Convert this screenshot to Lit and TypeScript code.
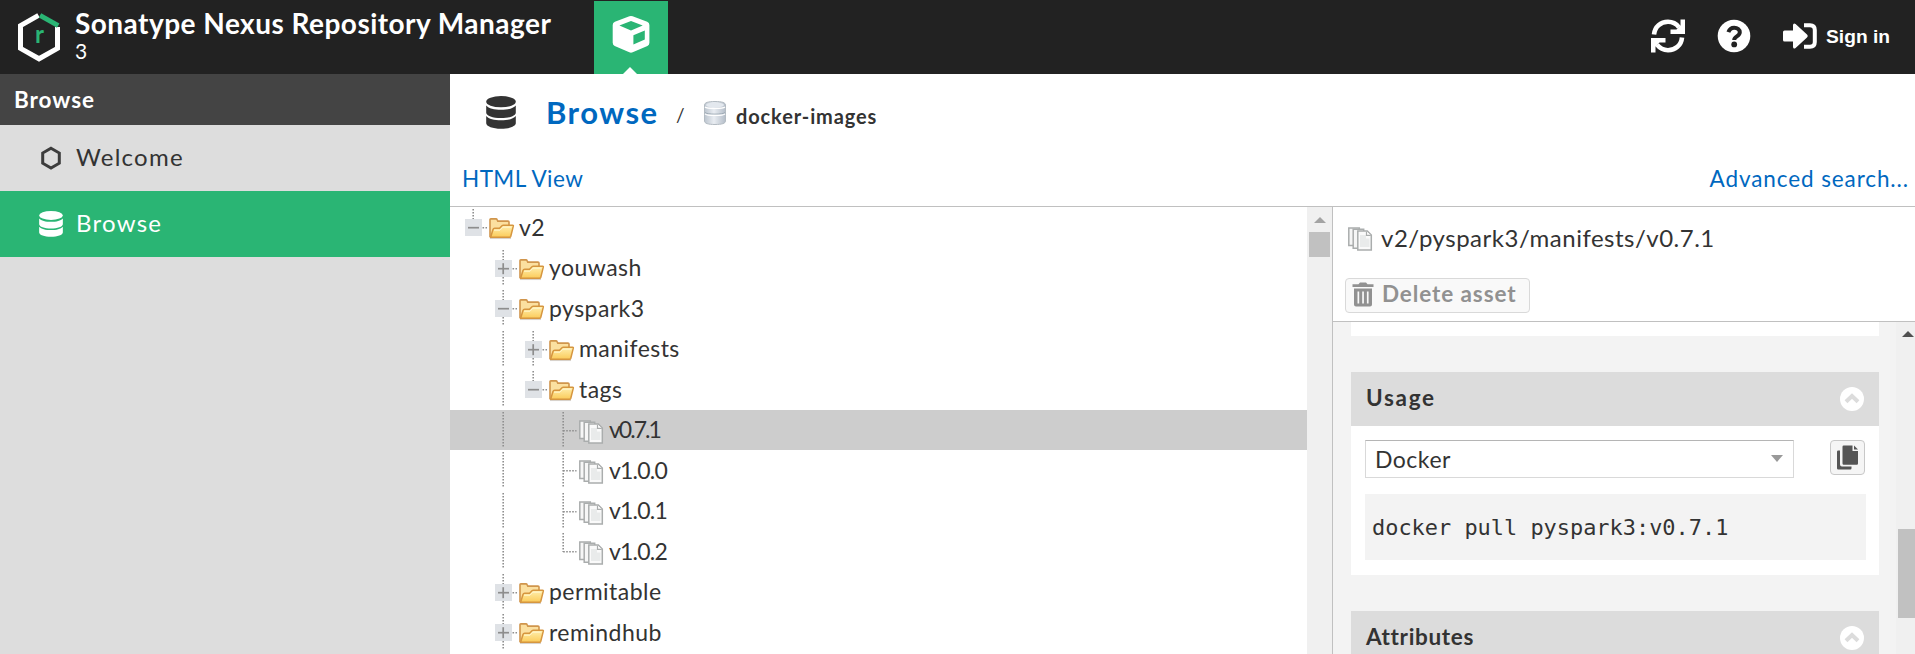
import { LitElement, html, css, svg, nothing } from "lit";
import { customElement, state } from "lit/decorators.js";
import { classMap } from "lit/directives/class-map.js";

type Guide = "none" | "line" | "tee" | "end" | "tee-plus" | "tee-minus" | "end-minus";

interface TreeRow {
  label: string;
  kind: "folder" | "asset";
  guides: Guide[];
  selected?: boolean;
}

const ROWS: TreeRow[] = [
  { label: "v2", kind: "folder", guides: ["end-minus"] },
  { label: "youwash", kind: "folder", guides: ["none", "tee-plus"] },
  { label: "pyspark3", kind: "folder", guides: ["none", "tee-minus"] },
  { label: "manifests", kind: "folder", guides: ["none", "line", "tee-plus"] },
  { label: "tags", kind: "folder", guides: ["none", "line", "end-minus"] },
  { label: "v0.7.1", kind: "asset", guides: ["none", "line", "none", "tee"], selected: true },
  { label: "v1.0.0", kind: "asset", guides: ["none", "line", "none", "tee"] },
  { label: "v1.0.1", kind: "asset", guides: ["none", "line", "none", "tee"] },
  { label: "v1.0.2", kind: "asset", guides: ["none", "line", "none", "end"] },
  { label: "permitable", kind: "folder", guides: ["none", "tee-plus"] },
  { label: "remindhub", kind: "folder", guides: ["none", "tee-plus"] },
];

const logo = html`<svg class="logo" width="44" height="50" viewBox="0 0 44 50">
  <g fill="none" stroke-width="5">
    <path d="M21.500 3.400 3.500 13.600v22.800L22 46.800l18.500-10.400V15" stroke="#fff" />
    <path d="M23 3.400 41.200 13.600" stroke="#2ab574" />
  </g>
  <text x="18" y="31" class="logo-r">r</text>
</svg>`;

const cube = html`<svg width="38" height="38" viewBox="0 0 38 38">
  <path fill="#fff" fill-rule="evenodd" d="M17.400 1.300a4 4 0 0 1 3.200 0l14.600 5.400q2.200.9 2.200 3.200v17.800q0 2.200-2 3.200l-14.700 6.400a4 4 0 0 1-3.400 0L2.700 30.900q-2-1-2-3.200V9.900q0-2.300 2.200-3.200zM19 5.900 7.400 10.500 19 15.500l11.700-5zM21.400 20.300v9.300l11.400-5V15.400z" />
</svg>`;

const database = (w: number, h: number) => html`<svg width=${w} height=${h} viewBox="0 0 30 33" preserveAspectRatio="none" fill="currentColor">
  <ellipse cx="15" cy="5.700" rx="14.800" ry="5.600" />
  <path d="M.2 9.400c2.500 3 8 4.300 14.800 4.300s12.300-1.300 14.800-4.300v7.300c0 3-6.600 5.400-14.800 5.400S.2 19.700.2 16.700z" />
  <path d="M.2 19.900c2.500 3 8 4.300 14.800 4.300s12.300-1.300 14.800-4.300v7.400c0 3-6.600 5.500-14.800 5.500S.2 30.300.2 27.300z" />
</svg>`;

const repo = html`<svg width="24" height="26" viewBox="0 0 24 26">
  <defs><linearGradient id="rg"><stop offset="0" stop-color="#bcc5cf" /><stop offset=".45" stop-color="#e9edf2" /><stop offset="1" stop-color="#b4bdc8" /></linearGradient></defs>
  <path d="M1.500 5C1.500 2.600 5 1.500 12 1.500S22.500 2.600 22.500 5v16c0 2.400-3.500 3.500-10.500 3.500S1.500 23.400 1.500 21z" fill="url(#rg)" stroke="#b3bbc2" />
  <ellipse cx="12" cy="5" rx="9" ry="2.400" fill="#e3e8ee" />
  <path d="M2 12.500c2 2.200 18 2.200 20 0" fill="none" stroke="#9fabb5" />
  <path d="M2 13.800c2 2.200 18 2.200 20 0M2 7c2 2 18 2 20 0" fill="none" stroke="#fff" stroke-width="1.200" />
</svg>`;

const hexagon = html`<svg width="24" height="26" viewBox="0 0 24 26"><path d="M12 3.300 20.300 8v10.200L12 23l-8.300-4.800V8z" fill="none" stroke="#3c3c3c" stroke-width="3" /></svg>`;

const folder = html`<svg width="26" height="24" viewBox="0 0 26 24">
  <defs>
    <linearGradient id="fg" x2="0" y2="1"><stop offset="0" stop-color="#fff0b0" /><stop offset="1" stop-color="#fbcb59" /></linearGradient>
  </defs>
  <path d="M1 21.300h21" stroke="#d8d2cb" stroke-width="1.500" />
  <path d="M1 20V2.600Q1 1.900 1.800 1.900H7q.8 0 1.100.7l.7 1.500H19q1 0 1 1V8.500" fill="#fbe0a0" stroke="#d0954c" stroke-width="1.600" />
  <path d="M1.600 20.200 4 12.500q.4-1.300 1.700-1.300h4.800l2.500-2.400q.5-.5 1.300-.5h9.400q.8 0 .6.900l-2.500 10q-.3 1-1.300 1z" fill="url(#fg)" stroke="#d6963f" stroke-width="1.500" />
  <path d="M5 13.200h6l2.800-3h8.500" fill="none" stroke="#fff6d0" />
</svg>`;

const asset = html`<svg width="26" height="26" viewBox="0 0 26 26">
  <g stroke="#aaadad" stroke-width="1.500">
    <path fill="#f6f6f6" d="M.8 1h10.500v17.500H.8z" />
    <path fill="#f6f6f6" d="M5.200 2.300h10.500v19H5.200z" />
    <path fill="#fafafa" d="M9.800 4h9.500l4 4v15H9.800z" />
  </g>
  <path d="M12 8h6v3.500h3.500V20H12z" fill="#e9ebeb" />
  <path d="M18.500 4.500v3.800h4.300" fill="#fff" stroke="#aaadad" stroke-width="1.200" />
</svg>`;

const refresh = html`<svg width="34" height="34" viewBox="0 0 34 34">
  <g fill="none" stroke="#fff" stroke-width="4.600"><path d="M3 15.500C3.700 7.500 9.700 2.800 17 2.800c4.500 0 8.300 2 11 5.500" /><path d="M31 18.500C30.300 26.500 24.300 31.200 17 31.200c-4.500 0-8.300-2-11-5.500" /></g>
  <path fill="#fff" d="M29.500.5H34V15H19.500v-4.500h6l4-4zM4.500 33.500H0V19h14.500v4.500h-6l-4 4z" />
</svg>`;

const help = html`<svg width="34" height="34" viewBox="0 0 34 34">
  <circle cx="17" cy="17" r="16.300" fill="#fff" />
  <path d="M11.400 13.200C12.500 10 14.500 8.700 17.200 8.700c3.300 0 5.600 1.900 5.600 4.600 0 4.300-5.600 3.900-5.600 7.700" fill="none" stroke="#222" stroke-width="4" />
  <circle cx="17.200" cy="25.400" r="2.900" fill="#222" />
</svg>`;

const signIn = html`<svg width="34" height="26" viewBox="0 0 34 26" fill="#fff">
  <path d="M1.500 7.500H10V2q.4-2.600 2.600-1L24 11.500q1.400 1.500 0 3L12.600 25Q10.400 26.500 10 24v-5.500H1.500Q0 18.500 0 17V9q0-1.500 1.500-1.500z" />
  <path d="M21 2.200h6q4.800 0 4.800 4.800v12q0 4.800-4.800 4.800h-6" fill="none" stroke="#fff" stroke-width="4" />
</svg>`;

const trash = html`<svg width="22" height="25" viewBox="0 0 22 25" fill="#919191">
  <path d="M.5 2.300h6L8 .5h6l1.500 1.800h6V5H.5z" />
  <path fill-rule="evenodd" d="M2 6.500h18v16q0 2-2 2H4q-2 0-2-2zM5.500 9.500v12h1.700v-12zm4.700 0v12h1.700v-12zm4.700 0v12h1.700v-12z" />
</svg>`;

const copy = html`<svg width="24" height="26" viewBox="0 0 24 26" fill="#555">
  <path d="M2.200 5.500H4V19.500q0 2 2 2h9.500v1.800q0 1.200-1.200 1.200H2.200Q1 24.500 1 23.300V6.700q0-1.200 1.200-1.200z" />
  <path d="M7.700.5H16.500V6H22v12.500q0 1.200-1.200 1.200H7.700q-1.200 0-1.200-1.200V1.700Q6.500.5 7.700.5z" /><path d="M18 .5 22 4.600H18z" />
</svg>`;

const collapse = html`<svg width="24" height="24" viewBox="0 0 24 24"><circle cx="12" cy="12" r="12" fill="#fff" /><path d="M6 14.800 12 9l6 5.800" fill="none" stroke="#dcdcdc" stroke-width="4" /></svg>`;

@customElement("tree-guide")
class TreeGuide extends LitElement {
  static properties = { kind: {} };
  declare kind: Guide;
  static styles = css`
    :host { display: block; flex: none; width: 30px; height: 40px; }
    svg { display: block; }
    .dots { stroke: #8f8f8f; stroke-width: 1.600; stroke-dasharray: 1.600 1.400; fill: none; }
    .box { fill: #dfe2e6; }
    .sign { stroke: #8d8d8d; stroke-width: 1.700; fill: none; }
  `;
  render() {
    const k = this.kind;
    if (k === "none") return nothing;
    const boxed = k.includes("-");
    const ends = k.startsWith("end");
    return html`<svg width="30" height="40" viewBox="0 0 30 40">
      <path class="dots" d=${ends ? "M14.200 2V21" : "M14.200 2V37"} />
      ${k === "line" ? nothing : svg`<path class="dots" d=${boxed ? "M23.500 20.700H28" : "M14.200 20.700H27.500"} />`}
      ${boxed ? svg`<rect class="box" x="6" y="12" width="17" height="17" /><path class="sign" d="M9 20.700H20" />` : nothing}
      ${k.endsWith("plus") ? svg`<path class="sign" d="M14.200 15.200V26.200" />` : nothing}
    </svg>`;
  }
}

@customElement("app-root")
class AppRoot extends LitElement {
  @state() private rows = ROWS;

  static styles = css`
    :host { display: flex; flex-direction: column; height: 654px; overflow: hidden; background: #fff; color: #333; font: 23px/28px Lato, "Open Sans", sans-serif; }
    * { box-sizing: border-box; }
    svg { display: block; flex: none; }
    .header { flex: none; height: 74px; background: #222; color: #fff; display: flex; padding-right: 25px; }
    .logo { margin: 12px 14px 0 17px; }
    .logo-r { font: bold 24px Lato, sans-serif; fill: #2ab574; }
    .brand { width: 519px; padding-top: 8px; white-space: nowrap; }
    .title { font-weight: 700; font-size: 28px; line-height: 30px; letter-spacing: .47px; }
    .version { font-size: 21px; line-height: 26px; }
    .tab { width: 74px; height: 73px; margin-top: 1px; background: #2ab574; display: flex; flex-direction: column; align-items: center; justify-content: space-between; padding-top: 14px; }
    .notch { border: 7px solid transparent; border-top: 0; border-bottom-color: #fff; margin-right: 2px; }
    .tools { margin-left: auto; display: flex; align-items: center; height: 71px; }
    .tools svg { margin-right: 32px; }
    .tools .sign svg { margin-right: 9px; }
    .sign { display: flex; align-items: center; font: bold 19.200px "Liberation Sans", sans-serif; white-space: nowrap; }
    .sign span { padding-top: 2px; }
    .main { flex: 1; min-height: 0; display: flex; }
    .side { width: 450px; flex: none; background: #ddd; }
    .side-title { height: 51px; background: #444; color: #fff; padding: 12px 14px; font-weight: 700; font-size: 22.500px; letter-spacing: .95px; }
    .item { height: 66px; padding-left: 39px; display: flex; align-items: center; gap: 13px; font-size: 24px; letter-spacing: 1.250px; }
    .item span { padding-bottom: 2px; }
    .item.active { background: #2ab574; color: #fff; }
    .content { flex: 1; min-width: 0; display: flex; flex-direction: column; }
    .crumbs { height: 77px; flex: none; display: flex; align-items: center; padding: 0 0 0 36px; }
    .crumb-main { margin-left: 30px; font-weight: 700; font-size: 31px; line-height: 36px; letter-spacing: 1.500px; color: #0068bf; padding-bottom: 2px; width: 112px; white-space: nowrap; }
    .slash { margin-left: 18px; font-size: 19px; padding-top: 5px; width: 27px; }
    .crumb-repo { margin-left: 9px; font-weight: 700; font-size: 20px; letter-spacing: .87px; padding-top: 7px; }
    .links { height: 55px; flex: none; padding: 13px 8px 0 12px; display: flex; justify-content: space-between; color: #0068bf; font-size: 22.500px; }
    .html-view { letter-spacing: .45px; padding-top: 1px; }
    .search { letter-spacing: .9px; margin-right: -2px; padding-top: 1px; }
    .panes { flex: 1; min-height: 0; border-top: 1px solid #c0c0c0; display: flex; }
    .tree { width: 857px; overflow: hidden; padding-top: .4px; }
    .row { height: 40.500px; display: flex; padding-left: 9px; }
    .row.selected { background: #cdcdcd; }
    .row > svg { margin: 10px 4px 0 0; }
    .row > span { padding-top: 5.500px; letter-spacing: .45px; }
    .row .ver { letter-spacing: -.8px; }
    .row.selected .ver { letter-spacing: -2px; }
    .bar { width: 25px; background: #f0f0f0; padding: 10px 2px 0; display: flex; flex-direction: column; align-items: center; }
    .up { border: 6px solid transparent; border-top: 0; border-bottom-color: #a3a3a3; }
    .thumb { align-self: stretch; height: 25px; background: #c1c1c1; margin-top: 9px; }
    .detail { flex: 1; min-width: 0; border-left: 1px solid #c0c0c0; display: flex; flex-direction: column; }
    .detail-head { height: 115px; flex: none; border-bottom: 1px solid #c0c0c0; padding: 17px 0 0 12px; }
    .path { display: flex; align-items: center; gap: 7px; padding-left: 3px; font-size: 24px; letter-spacing: .5px; }
    .path span { padding-bottom: 3px; }
    .path svg { margin-top: 1px; }
    .delete { margin-top: 23px; width: 185px; height: 35px; border: 1px solid #d9d9d9; border-radius: 4px; background: #f9f9f9; color: #919191; display: flex; align-items: center; gap: 8px; padding: 0 0 3px 6px; font-weight: 700; font-size: 22.500px; letter-spacing: .9px; white-space: nowrap; }
    .delete svg { margin-top: 1px; }
    .scroll { flex: 1; min-height: 0; display: flex; background: #f3f3f3; overflow: hidden; }
    .cards { width: 528px; flex: none; margin: 0 17px 0 18px; }
    .stub { height: 14px; background: #fff; margin-bottom: 36px; }
    .card { background: #fff; margin-bottom: 36px; }
    .card-head { height: 54px; background: #dcdcdc; padding: 0 15px; display: flex; align-items: center; justify-content: space-between; font-weight: 700; font-size: 22.500px; letter-spacing: .65px; }
    .card-head span { padding-bottom: 2px; }
    .usage { letter-spacing: 1.700px; }
    .card-body { padding: 14px 13px 15px 14px; }
    .controls { display: flex; justify-content: space-between; margin-bottom: 16px; padding-right: 1px; }
    .select { width: 429px; height: 38px; border: 1px solid #d9d9d9; border-top-color: #b5b5b5; display: flex; justify-content: space-between; align-items: center; padding: 0 10px 1px 9px; letter-spacing: .5px; }
    .down { border: 6.500px solid transparent; border-bottom: 0; border-top: 7px solid #999; margin-bottom: 1px; }
    .copy { width: 35px; height: 35px; border: 1px solid #c8c8c8; border-radius: 4px; background: #f5f5f5; padding: 4px 0 0 5px; }
    .code { height: 66px; background: #f3f3f3; padding: 20px 7px; font: 21.930px/28px "DejaVu Sans Mono", monospace; white-space: pre; }
    .bar2 { flex: 1; background: #f0f0f0; padding: 9px 0 0 2px; }
    .bar2 .up { width: 0; margin-left: 4px; border-bottom-color: #505050; }
    .bar2 .thumb { height: 89px; margin-top: 192px; }
  `;

  private row(r: TreeRow) {
    return html`<div class=${classMap({ row: true, selected: !!r.selected })}>
      ${r.guides.map((g) => html`<tree-guide .kind=${g}></tree-guide>`)}
      ${r.kind === "folder" ? folder : asset}
      <span class=${r.kind === "asset" ? "ver" : ""}>${r.label}</span>
    </div>`;
  }

  render() {
    return html`
      <div class="header">
        ${logo}
        <div class="brand"><div class="title">Sonatype Nexus Repository Manager</div><div class="version">3</div></div>
        <div class="tab">${cube}<div class="notch"></div></div>
        <div class="tools">${refresh}${help}<div class="sign">${signIn}<span>Sign in</span></div></div>
      </div>
      <div class="main">
        <div class="side">
          <div class="side-title">Browse</div>
          <div class="item">${hexagon}<span>Welcome</span></div>
          <div class="item active">${database(24, 26)}<span>Browse</span></div>
        </div>
        <div class="content">
          <div class="crumbs">
            ${database(30, 33)}
            <span class="crumb-main">Browse</span><span class="slash">/</span>${repo}<span class="crumb-repo">docker-images</span>
          </div>
          <div class="links"><span class="html-view">HTML View</span><span class="search">Advanced search...</span></div>
          <div class="panes">
            <div class="tree">${this.rows.map((r) => this.row(r))}</div>
            <div class="bar"><div class="up"></div><div class="thumb"></div></div>
            <div class="detail">
              <div class="detail-head">
                <div class="path">${asset}<span>v2/pyspark3/manifests/v0.7.1</span></div>
                <div class="delete">${trash}<span>Delete asset</span></div>
              </div>
              <div class="scroll">
                <div class="cards">
                  <div class="stub"></div>
                  <div class="card">
                    <div class="card-head"><span class="usage">Usage</span>${collapse}</div>
                    <div class="card-body">
                      <div class="controls">
                        <div class="select"><span>Docker</span><div class="down"></div></div>
                        <div class="copy">${copy}</div>
                      </div>
                      <div class="code">docker pull pyspark3:v0.7.1</div>
                    </div>
                  </div>
                  <div class="card"><div class="card-head"><span>Attributes</span>${collapse}</div></div>
                </div>
                <div class="bar2"><div class="up"></div><div class="thumb"></div></div>
              </div>
            </div>
          </div>
        </div>
      </div>
    `;
  }
}
